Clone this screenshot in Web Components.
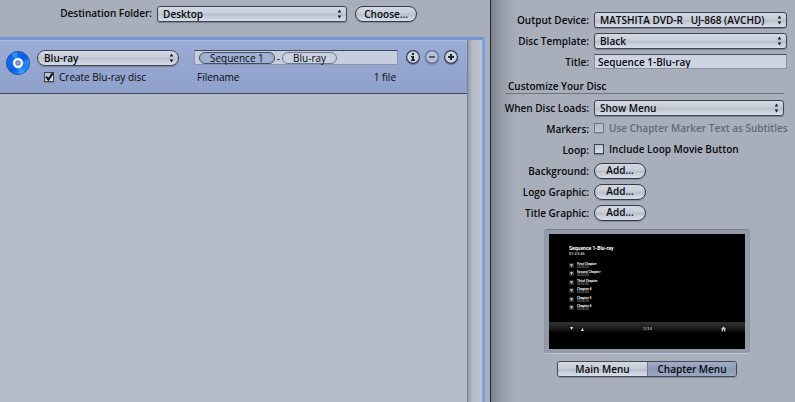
<!DOCTYPE html>
<html lang="en">
<head>
<meta charset="utf-8">
<title>Disc export</title>
<style>
html, body { margin: 0; min-height: 100vh; }
body {
  font: 600 10px/14px "Open Sans", "Noto Sans", sans-serif;
  color: #08090c;
  background: #a9aebb;
  --edge: #3f4653;
  --metal: linear-gradient(#d3d8e1, #c8cdd8 45%, #b8bfcc 52%, #c6cdd9 70%, #d9dfe9);
}
</style>
</head>
<body>
<export-window></export-window>
<script>
class Base extends HTMLElement {
  connectedCallback() {
    if (this.shadowRoot) return;
    const root = this.attachShadow({ mode: 'open', delegatesFocus: true });
    root.innerHTML = `<style>
      *, :host { box-sizing: border-box; }
      button, input, select { font: inherit; color: inherit; margin: 0; }
    </style>` + this.template();
  }
}

/* Drop-down; attributes: name, value, pill */
customElements.define('pop-up', class extends Base {
  template() {
    return `<style>
      :host { display: grid; height: 16px; }
      select, svg { grid-area: 1 / 1; }
      select {
        appearance: none; width: 100%; height: 16px; padding: 0 16px 0 5px;
        border: 1px solid var(--edge); border-radius: 3px; line-height: 14px;
        background: var(--metal); box-shadow: 0 1px 1px #7a8193;
      }
      :host([pill]) select { border-radius: 8px; padding-left: 6px; }
      svg { justify-self: end; align-self: center; margin-right: 4px; pointer-events: none; }
    </style>
    <select aria-label="${this.getAttribute('name')}"><option>${this.getAttribute('value')}</option></select>
    <svg width="7" height="10" viewBox="0 0 7 10" fill="#15181f" aria-hidden="true"><path d="M3.5 .5 5.3 3.6H1.7ZM3.5 9.5 5.3 6.4H1.7Z"/></svg>`;
  }
});

/* Rounded push button */
customElements.define('push-button', class extends Base {
  template() {
    return `<style>
      :host { display: inline-block; height: 16px; }
      button {
        display: block; min-width: 52px; height: 16px; padding: 0 8px; border: 1px solid #343b48;
        border-radius: 8px; line-height: 13px; background: var(--metal);
        box-shadow: 0 1px 1px #858c9c;
      }
    </style><button type="button"><slot></slot></button>`;
  }
});

/* Tick box with its caption; attributes: checked, disabled */
customElements.define('check-box', class extends Base {
  template() {
    const c = this.hasAttribute('checked') ? 'checked' : '';
    const d = this.hasAttribute('disabled') ? 'disabled' : '';
    return `<style>
      :host { display: block; }
      label { display: inline-flex; align-items: center; gap: 4px; white-space: nowrap; }
      .box { display: grid; width: 11px; height: 11px; }
      input, svg { grid-area: 1 / 1; }
      input {
        appearance: none; width: 10px; height: 10px; border: 1px solid #3d4350;
        background: linear-gradient(#bcc3d0, #d7dce5); box-shadow: 0 1px 1px #80879a;
      }
      input:disabled { opacity: .5; }
      svg { display: none; pointer-events: none; overflow: visible; }
      input:checked + svg { display: block; }
      :host([disabled]) { color: #646975; }
    </style>
    <label><span class="box"><input type="checkbox" ${c} ${d}><svg width="10" height="10" viewBox="0 0 10 10" fill="none" stroke="#0c0f16" stroke-width="2" aria-hidden="true"><path d="M2 4.6 4.4 7.6 8.6 1.4"/></svg></span><slot></slot></label>`;
  }
});

/* Caption and control on one line of a form */
customElements.define('form-row', class extends Base {
  template() {
    return `<style>
      :host { display: grid; grid-template-columns: 98px minmax(0, 1fr); column-gap: 5px; align-items: center; height: 21px; }
      span { text-align: right; white-space: nowrap; }
    </style><span>${this.getAttribute('label')}:</span><slot></slot>`;
  }
});

customElements.define('title-field', class extends Base {
  template() {
    return `<style>
      :host { display: block; height: 15px; }
      input {
        display: block; width: 100%; height: 15px; padding: 0 3px; outline: 0; border-radius: 0;
        border: 1px solid #8890a0; border-top-color: #4a505d; background: #ced4e3;
      }
    </style><input type="text" aria-label="Title" value="Sequence 1-Blu-ray">`;
  }
});

customElements.define('blu-disc', class extends Base {
  template() {
    return `<style>:host, svg { display: block; }</style>
    <svg width="26" height="26" viewBox="0 0 26 26" role="img" aria-label="Blu-ray disc">
      <defs><linearGradient id="b" x1="0" y1="0" x2="1" y2="1"><stop offset="0" stop-color="#0c55d8"/><stop offset=".3" stop-color="#0f6df2"/><stop offset=".52" stop-color="#0a5dec"/><stop offset=".8" stop-color="#1f8dff"/><stop offset="1" stop-color="#0b5de0"/></linearGradient></defs>
      <circle cx="13" cy="13" r="11.5" fill="url(#b)" stroke="#24509f"/>
      <path d="M13 13 6 3.8A11 11 0 0 1 12 2ZM13 13 20 22.200A11 11 0 0 1 14 24Z" fill="#4eb4ff" opacity=".5"/>
      <path d="M13 13 24 10A11 11 0 0 1 24 15Z" fill="#3d9eff" opacity=".4"/>
      <circle cx="13" cy="13" r="5.200" fill="#eef3fd"/>
      <circle cx="13" cy="13" r="2.200" fill="#93a7d8" stroke="#4c6dba"/>
    </svg>`;
  }
});

/* Round icon button; attributes: kind (info, remove, add), disabled */
customElements.define('round-button', class extends Base {
  template() {
    const kind = this.getAttribute('kind');
    const glyph = {
      info: '<path d="M6 3h2v2H6ZM5 6h3v3.500h1V11H5V9.500h1V7.400H5Z"/>',
      remove: '<path d="M4 6h6v2H4Z"/>',
      add: '<path d="M4 6h2V4h2v2h2v2H8v2H6V8H4Z"/>'
    }[kind];
    return `<style>
      :host { display: block; }
      button {
        display: grid; place-items: center; width: 14px; height: 14px; padding: 0; border: 0; border-radius: 50%;
        box-shadow: 0 1px 1px #6b7899; background: none;
      }
      button:disabled { opacity: .55; }
      svg { display: block; }
    </style>
    <button type="button" aria-label="${kind}" ${this.hasAttribute('disabled') ? 'disabled' : ''}>
      <svg width="14" height="14" viewBox="0 0 14 14" fill="#1e2533"><circle cx="7" cy="7" r="6.400" fill="#ccd2de" stroke="#333d52" stroke-width="1.200"/>${glyph}</svg>
    </button>`;
  }
});

/* Name field that holds tokens */
customElements.define('token-field', class extends Base {
  template() {
    return `<style>
      :host {
        display: flex; align-items: center; height: 15px; padding: 0 4px; font-weight: 500;
        border: 1px solid #8b95ad; border-top-color: #3f4757; background: #c6cede;
      }
      button {
        height: 12px; padding: 0 10px; border: 1px solid #6d7a95; border-radius: 6px;
        line-height: 10px; white-space: nowrap; background: #c9d0e0; 
      }
      button.on { border-color: #414f6b; background: #9fb0d3; }
      span { padding: 0 2px; }
    </style><button type="button" class="on">Sequence 1</button><span>-</span><button type="button">Blu-ray</button>`;
  }
});

customElements.define('output-row', class extends Base {
  template() {
    return `<style>
      :host {
        display: grid; grid-template-columns: 26px minmax(0, 148fr) minmax(0, 219fr) auto;
        padding: 9px 9px 0 5px; height: 54px; align-items: start; align-content: start; row-gap: 4px;
        background: linear-gradient(#9aabd6, #8fa0ca); border-top: 1px solid #aab9df; border-bottom: 1px solid #3e4861;
      }
      blu-disc { grid-row: 1 / 3; }
      pop-up { margin: 0 0 0 6px; }
      check-box { margin-left: 13px; }
      token-field { margin-left: 15px; }
      check-box, .meta { font-weight: 500; }
      .meta { display: flex; justify-content: space-between; margin: 0 2px 0 18px; }
      .tools { display: flex; gap: 5px; margin-left: 8px; }
    </style>
    <blu-disc></blu-disc>
    <pop-up pill name="Output" value="Blu-ray"></pop-up>
    <token-field></token-field>
    <div class="tools"><round-button kind="info"></round-button><round-button kind="remove" disabled></round-button><round-button kind="add"></round-button></div>
    <check-box checked>Create Blu-ray disc</check-box>
    <div class="meta"><span>Filename</span><span>1 file</span></div>`;
  }
});

customElements.define('outputs-pane', class extends Base {
  template() {
    return `<style>
      :host { display: grid; grid-template-rows: 37px 1fr; min-width: 0; border-right: 1px solid #1b202c; background: #a9aebb; }
      header { display: flex; align-items: flex-start; padding: 6px 73px 0 0; }
      .cap { flex: 152 0 0; text-align: right; white-space: nowrap; }
      header pop-up { flex: 190 0 0; margin: 0 8px 0 5px; }
      .list {
        display: grid; grid-template: auto 1fr / 1fr 15px; margin-right: 5px;
        border: solid #7fa0dc; border-width: 3px 3px 0 0; border-top-color: #7196d6; border-radius: 0 3px 0 0;
        box-shadow: 0 0 2px #86a3d8;
        background: #b4bcca;
      }
      .bar { grid-area: 1 / 2 / 3 / 3; background: linear-gradient(90deg, #6f7787, #9fa5b3 2px, #b7bcc9 6px, #c0c4d0); }
    </style>
    <header><span class="cap">Destination Folder:</span><pop-up name="Destination Folder" value="Desktop"></pop-up><push-button>Choose...</push-button></header>
    <section class="list"><output-row></output-row><div class="bar"></div></section>`;
  }
});

customElements.define('menu-preview', class extends Base {
  template() {
    const rows = ['First Chapter', 'Second Chapter', 'Third Chapter', 'Chapter 4', 'Chapter 5', 'Chapter 6'];
    return `<style>
      :host { display: block; padding: 4px; border: 1px solid; border-color: #7c818f #9096a5 #c3c7d2; border-radius: 3px; background: #959aaa; }
      .screen { display: grid; grid-template-rows: 88px 27px; background: #000; color: #d8d8d8; }
      .body { padding: 12px 0 0 20px; }
      h3 { margin: 0; font: 700 5px/5px Roboto, sans-serif; color: #fff; }
      p { margin: 0; font: 500 4px/5px Roboto, sans-serif; }
      ul { margin: 6px 0 0; padding: 0; list-style: none; display: flex; flex-direction: column; justify-content: space-between; height: 49px; }
      li { display: flex; gap: 3px; align-items: center; height: 7px; }
      li svg { display: block; }
      li div { font: 700 3px/4px "Open Sans", sans-serif; color: #fff; }
      li small { display: block; font: 400 3px/3px Roboto, sans-serif; color: #a8a8a8; }
      .nav { display: grid; grid-template-columns: 1fr auto 1fr; padding: 4px 19px 0 20px; align-items: start; font: 400 4px/6px "DejaVu Sans", sans-serif;
        background: linear-gradient(#333, #1c1c1c 6px, #000 11px); }
      .nav svg { display: block; }
      .nav svg:last-child { justify-self: end; }
    </style>
    <div class="screen">
      <div class="body"><h3>Sequence 1-Blu-ray</h3><p>01:23:46</p>
      <ul>${rows.map(r => `<li><svg width="5" height="5" viewBox="0 0 5 5"><path fill="#2c2c2c" d="M0 0h5v5H0Z"/><path fill="#ddd" d="M1 1.200h3L2.500 4Z"/></svg><div>${r}<small>00:00:00</small></div></li>`).join('')}</ul></div>
      <div class="nav"><svg width="16" height="6" viewBox="0 0 16 6" fill="#ddd"><path d="M1 1h3.200L2.600 4ZM11.800 5h3.200L13.400 2Z"/></svg><span>1/14</span><svg width="5" height="6" viewBox="0 0 5 6" fill="#ccc"><path d="M0 3 2.500 .5 5 3H4.300V5.500H3V3.500H2V5.500H.7V3Z"/></svg></div>
    </div>`;
  }
});

customElements.define('segment-switch', class extends Base {
  template() {
    return `<style>
      :host { display: grid; grid-template-columns: 1fr 1fr; height: 16px; border: 1px solid #414957; border-radius: 3px; overflow: hidden; box-shadow: 0 1px 1px #858c9c; }
      button { padding: 0; border: 0; line-height: 14px; white-space: nowrap; background: var(--metal); }
      button + button { border-left: 1px solid #6d788e; background: linear-gradient(#a0aec8, #8c9ab6 50%, #9aa8c2); }
    </style><button type="button" aria-pressed="false">Main Menu</button><button type="button" aria-pressed="true">Chapter Menu</button>`;
  }
});

customElements.define('settings-pane', class extends Base {
  template() {
    return `<style>
      :host { display: block; min-width: 0; padding-top: 9px; background: linear-gradient(90deg, #7c808a, #959aa6 10px, #a4a9b6 20px, #a9aebb 30px); }
      .top { padding-right: 8px; }
      h2 { margin: 6px 11px 3px 15px; padding: 1px 2px 0; font: inherit; line-height: 14px; border-bottom: 1px solid #6f7483; }
      .custom { padding-right: 11px; }
      menu-preview { width: 206px; margin: 6px 0 0 53px; }
      segment-switch { width: 180px; margin: 7px 0 0 66px; }
    </style>
    <div class="top">
      <form-row label="Output Device"><pop-up name="Output Device" value="MATSHITA DVD-R&nbsp;&nbsp; UJ-868 (AVCHD)"></pop-up></form-row>
      <form-row label="Disc Template"><pop-up name="Disc Template" value="Black"></pop-up></form-row>
      <form-row label="Title"><title-field></title-field></form-row>
    </div>
    <h2>Customize Your Disc</h2>
    <div class="custom">
      <form-row label="When Disc Loads"><pop-up name="When Disc Loads" value="Show Menu"></pop-up></form-row>
      <form-row label="Markers"><check-box disabled>Use Chapter Marker Text as Subtitles</check-box></form-row>
      <form-row label="Loop"><check-box>Include Loop Movie Button</check-box></form-row>
      <form-row label="Background"><push-button>Add...</push-button></form-row>
      <form-row label="Logo Graphic"><push-button>Add...</push-button></form-row>
      <form-row label="Title Graphic"><push-button>Add...</push-button></form-row>
    </div>
    <menu-preview></menu-preview>
    <segment-switch></segment-switch>`;
  }
});

customElements.define('export-window', class extends Base {
  template() {
    return `<style>
      :host { display: grid; grid-template-columns: minmax(0, 1fr) 304px; min-height: 100vh; }
    </style><outputs-pane></outputs-pane><settings-pane></settings-pane>`;
  }
});
</script>
</body>
</html>
